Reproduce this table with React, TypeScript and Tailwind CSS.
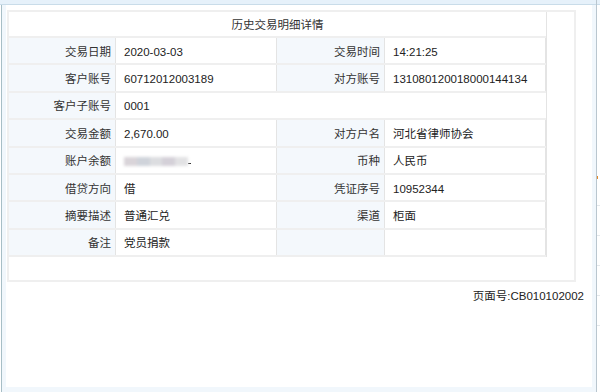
import * as React from "react";

type Cell = { label: string; value?: React.ReactNode; span?: boolean };

const rows: Cell[][] = [
  [
    { label: "交易日期", value: "2020-03-03" },
    { label: "交易时间", value: "14:21:25" },
  ],
  [
    { label: "客户账号", value: "60712012003189" },
    { label: "对方账号", value: "131080120018000144134" },
  ],
  [{ label: "客户子账号", value: "0001", span: true }],
  [
    { label: "交易金额", value: "2,670.00" },
    { label: "对方户名", value: "河北省律师协会" },
  ],
  [
    { label: "账户余额", value: <Masked /> },
    { label: "币种", value: "人民币" },
  ],
  [
    { label: "借贷方向", value: "借" },
    { label: "凭证序号", value: "10952344" },
  ],
  [
    { label: "摘要描述", value: "普通汇兑" },
    { label: "渠道", value: "柜面" },
  ],
  [
    { label: "备注", value: "党员捐款" },
    { label: "", value: "" },
  ],
];

function Masked() {
  return (
    <span className="flex items-center h-[10px]">
      <span className="flex h-[9px] w-[64px] blur-[1.5px]">
        <span className="flex-1 bg-[#d9d4d9]" />
        <span className="flex-1 bg-[#cfd3da]" />
        <span className="flex-1 bg-[#dcdde0]" />
        <span className="flex-1 bg-[#d4d0d8]" />
        <span className="flex-1 bg-[#e2e2e4]" />
      </span>
      <span className="w-[3px] h-[1px] bg-[#333] mt-[4px]" />
    </span>
  );
}

function Label({ text }: { text: string }) {
  return (
    <div className="bg-[#f4f8fc] border-r border-[#e4e4e4] flex items-center justify-end pr-[4px] pt-[3px]">
      {text}
    </div>
  );
}

function Value({ children, span }: { children?: React.ReactNode; span?: boolean }) {
  return (
    <div
      className={`bg-white flex items-center pl-[8px] pt-[3px] text-[#222] ${
        span ? "col-span-3" : "border-r border-[#e4e4e4]"
      }`}
    >
      {children}
    </div>
  );
}

export default function App() {
  return (
    <div
      className="w-[600px] h-[392px] flex bg-white text-[11.5px] text-[#333]"
      style={{ fontFamily: '"Liberation Sans", "Noto Sans CJK SC", sans-serif' }}
    >
      {/* Main area */}
      <div className="w-[596px] flex flex-col">
        <div className="h-[5px] bg-[#e6f1fa] border-b border-[#c9dce9]" />
        <div className="flex-1 flex pl-[1px]">
          <div className="flex-1 flex border-l border-[#a7bec6] bg-[#f1f7fc] pl-[4px] pr-[4px] pb-[5px]">
            <div className="flex-1 bg-white flex flex-col pt-[5px] pl-[1px]">
              {/* Detail box */}
              <div className="w-[569px] h-[272px] border-2 border-[#efefef]">
                <div className="w-[538px] border-r border-[#e4e4e4]">
                  <div className="h-[26px] flex items-center justify-center pt-[3px] border-b-2 border-[#efefef] bg-white">
                    历史交易明细详情
                  </div>
                  {rows.map((row, i) => (
                    <div
                      key={i}
                      className="grid grid-cols-[107px_161px_108px_161px] h-[27.4px] border-b-2 border-[#efefef]"
                    >
                      {row.map((c, j) => (
                        <React.Fragment key={j}>
                          <Label text={c.label} />
                          <Value span={c.span}>{c.value}</Value>
                        </React.Fragment>
                      ))}
                    </div>
                  ))}
                </div>
              </div>

              {/* Footer */}
              <div className="flex justify-end pr-[8px] pt-[6px] text-[11.5px] text-[#222]">
                页面号:CB010102002
              </div>
            </div>
          </div>
        </div>
      </div>

      {/* Right edge of underlying page */}
      <div className="flex-1 border-l border-[#b9c6cf] flex flex-col">
        <div className="h-[5px] bg-[#e6f1fa] border-b border-[#c9dce9]" />
        <div className="h-[171px]" />
        <div className="h-[3px] w-[1px] bg-[#e38b2c]" />
        <div className="h-[27px] border-b border-[#e4e8ec]" />
        <div className="h-[30px] border-b border-[#e4e8ec]" />
        <div className="h-[30px] border-b border-[#e4e8ec]" />
        <div className="h-[30px] border-b border-[#e4e8ec]" />
        <div className="h-[30px] border-b border-[#e4e8ec]" />
      </div>
    </div>
  );
}
